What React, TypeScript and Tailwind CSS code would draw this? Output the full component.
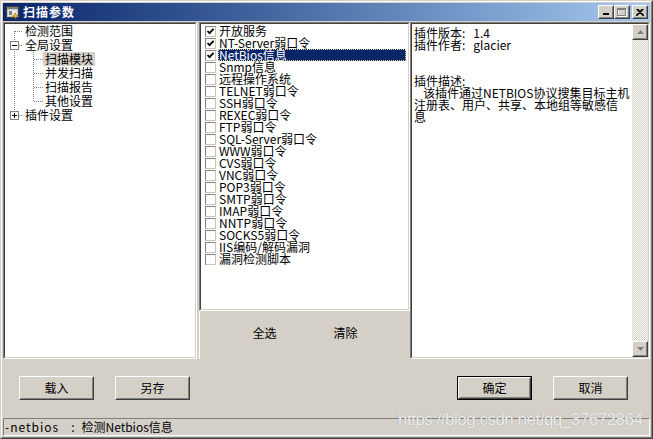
import React from "react";

function Sunken({ className = "", inner = "", children }: { className?: string; inner?: string; children?: React.ReactNode }) {
  return (
    <div className={`border border-t-[#808080] border-l-[#808080] border-b-white border-r-white ${className}`}>
      <div className={`h-full border border-t-[#404040] border-l-[#404040] border-b-[#d4d0c8] border-r-[#d4d0c8] ${inner}`}>{children}</div>
    </div>
  );
}

function Raised({ className = "", inner = "", children }: { className?: string; inner?: string; children?: React.ReactNode }) {
  return (
    <div className={`border border-t-white border-l-white border-b-[#404040] border-r-[#404040] bg-[#d4d0c8] ${className}`}>
      <div className={`h-full border border-t-[#d4d0c8] border-l-[#d4d0c8] border-b-[#808080] border-r-[#808080] ${inner}`}>{children}</div>
    </div>
  );
}

function Button({ label, def = false }: { label: string; def?: boolean }) {
  if (def) {
    return (
      <div className="w-[75px] h-[24px] border border-black">
        <Raised className="h-full" inner="flex items-center justify-center">
          {label}
        </Raised>
      </div>
    );
  }
  return (
    <Raised className="w-[75px] h-[24px]" inner="flex items-center justify-center">
      {label}
    </Raised>
  );
}

function Check({ checked }: { checked: boolean }) {
  return (
    <div className="w-[11px] h-[11px] shrink-0 border border-t-[#808080] border-l-[#808080] border-b-[#c8c4bc] border-r-[#c8c4bc] bg-white">
      {checked && (
        <svg width="9" height="9" viewBox="0 0 9 9" className="block">
          <polyline points="1.5,4 3.5,6.2 7.6,1.8" fill="none" stroke="#000" strokeWidth="1.8" />
        </svg>
      )}
    </div>
  );
}

const items: [string, boolean][] = [
  ["开放服务", true],
  ["NT-Server弱口令", true],
  ["NetBios信息", true],
  ["Snmp信息", false],
  ["远程操作系统", false],
  ["TELNET弱口令", false],
  ["SSH弱口令", false],
  ["REXEC弱口令", false],
  ["FTP弱口令", false],
  ["SQL-Server弱口令", false],
  ["WWW弱口令", false],
  ["CVS弱口令", false],
  ["VNC弱口令", false],
  ["POP3弱口令", false],
  ["SMTP弱口令", false],
  ["IMAP弱口令", false],
  ["NNTP弱口令", false],
  ["SOCKS5弱口令", false],
  ["IIS编码/解码漏洞", false],
  ["漏洞检测脚本", false],
];

const tree: { label: string; level: number; selected?: boolean }[] = [
  { label: "检测范围", level: 0 },
  { label: "全局设置", level: 0 },
  { label: "扫描模块", level: 1, selected: true },
  { label: "并发扫描", level: 1 },
  { label: "扫描报告", level: 1 },
  { label: "其他设置", level: 1 },
  { label: "插件设置", level: 0 },
];

function TreeLines() {
  const dot = { stroke: "#808080", strokeWidth: 1, strokeDasharray: "1 1", shapeRendering: "crispEdges" as const };
  return (
    <svg width="60" height="100" className="absolute left-0 top-0 pointer-events-none">
      <line x1="9.5" y1="7" x2="9.5" y2="91" {...dot} />
      <line x1="10" y1="7.5" x2="18" y2="7.5" {...dot} />
      <line x1="10" y1="21.5" x2="18" y2="21.5" {...dot} />
      <line x1="10" y1="91.5" x2="18" y2="91.5" {...dot} />
      <line x1="28.5" y1="26" x2="28.5" y2="77" {...dot} />
      <line x1="29" y1="35.5" x2="38" y2="35.5" {...dot} />
      <line x1="29" y1="49.5" x2="38" y2="49.5" {...dot} />
      <line x1="29" y1="63.5" x2="38" y2="63.5" {...dot} />
      <line x1="29" y1="77.5" x2="38" y2="77.5" {...dot} />
      <rect x="5.5" y="17.5" width="8" height="8" fill="#fff" stroke="#808080" shapeRendering="crispEdges" />
      <line x1="7" y1="21.5" x2="12" y2="21.5" stroke="#000" shapeRendering="crispEdges" />
      <rect x="5.5" y="87.5" width="8" height="8" fill="#fff" stroke="#808080" shapeRendering="crispEdges" />
      <line x1="7" y1="91.5" x2="12" y2="91.5" stroke="#000" shapeRendering="crispEdges" />
      <line x1="9.5" y1="89" x2="9.5" y2="94" stroke="#000" shapeRendering="crispEdges" />
    </svg>
  );
}

export default function App() {
  return (
    <div className="w-[653px] h-[439px] font-['Noto_Sans_CJK_SC','Liberation_Sans',sans-serif] text-[12px] leading-[12px] text-black bg-[#d4d0c8] border border-t-[#d4d0c8] border-l-[#d4d0c8] border-b-[#404040] border-r-[#404040]">
      <div className="h-full border border-t-white border-l-white border-b-[#808080] border-r-[#808080] p-px flex flex-col relative">
        {/* Title bar */}
        <div className="h-[18px] shrink-0 flex items-center bg-linear-to-r from-[#0a246a] to-[#a6caf0]">
          <svg width="16" height="16" viewBox="0 0 16 16" className="ml-[2px] shrink-0">
            <rect x="1.5" y="2.5" width="12" height="11" fill="#c0c0c0" stroke="#404040" />
            <rect x="2" y="3" width="11" height="2" fill="#808080" />
            <rect x="3" y="6" width="9" height="6" fill="#e8e8e8" />
            <rect x="4" y="7" width="3" height="4" fill="#808080" />
            <path d="M10 9 L11 11 L13 11.5 L11 12.5 L10.5 15 L9.5 12.5 L7.5 12 L9.5 11 Z" fill="#f0d000" stroke="#806000" strokeWidth="0.5" />
          </svg>
          <span className="ml-[2px] text-white font-bold tracking-[1px]">扫描参数</span>
          <div className="ml-auto mr-[2px] flex items-center">
            <Raised className="w-[16px] h-[14px]" inner="relative">
              <div className="absolute left-[3px] bottom-[2px] w-[6px] h-[2px] bg-black" />
            </Raised>
            <Raised className="w-[16px] h-[14px]" inner="flex items-center justify-center">
              <svg width="10" height="9" viewBox="0 0 10 9">
                <rect x="1.5" y="1.5" width="8" height="7" fill="none" stroke="#fff" />
                <rect x="0.5" y="0.5" width="8" height="7" fill="none" stroke="#808080" />
                <line x1="0" y1="1.5" x2="9" y2="1.5" stroke="#808080" />
              </svg>
            </Raised>
            <Raised className="w-[16px] h-[14px] ml-[2px]" inner="flex items-center justify-center">
              <svg width="8" height="7" viewBox="0 0 8 7">
                <path d="M0.5 0 L7.5 7 M1.5 0 L8 6.5 M7.5 0 L0.5 7 M6.5 0 L0 6.5" stroke="#000" strokeWidth="1.1" />
              </svg>
            </Raised>
          </div>
        </div>

        {/* Panels */}
        <div className="mt-px h-[337px] shrink-0 flex">
          {/* Tree */}
          <Sunken className="w-[194px] h-full" inner="bg-white relative">
            <TreeLines />
            <div className="relative">
              {tree.map((t, i) => (
                <div key={i} className="h-[14px] flex items-center">
                  <div className={t.level === 0 ? "w-[18px]" : "w-[38px]"} />
                  <span className={`px-[2px] h-[14px] flex items-center ${t.selected ? "bg-[#d4d0c8]" : ""}`}>{t.label}</span>
                </div>
              ))}
            </div>
          </Sunken>

          <div className="w-[2px]" />

          {/* Middle */}
          <div className="w-[211px] h-full flex flex-col">
            <Sunken className="h-[289px]" inner="bg-white pt-px">
              {items.map(([label, checked], i) => {
                const sel = i === 2;
                return (
                  <div key={i} className="h-[12px] flex items-center pl-[4px]">
                    <Check checked={checked} />
                    <span
                      className={`ml-[2px] px-px h-[12px] flex items-center whitespace-nowrap ${
                        sel ? "flex-1 mr-[2px] bg-[#0a246a] text-white outline-1 outline-dotted outline-[#e8d890] -outline-offset-1" : ""
                      }`}
                    >
                      {label}
                    </span>
                  </div>
                );
              })}
            </Sunken>
            <div className="flex-1 flex pl-[27px] pt-[10px] gap-[6px] border-l border-l-white">
              <div className="w-[75px] h-[24px] flex items-center justify-center">全选</div>
              <div className="w-[75px] h-[24px] flex items-center justify-center">清除</div>
            </div>
          </div>

          {/* Right */}
          <Sunken className="w-[240px] h-full" inner="flex">
            <div className="flex-1 bg-white pl-[2px] pt-[3px]">
              <div className="h-[12px] flex items-center">
                <span>插件版本:</span>
                <span className="ml-[8px]">1.4</span>
              </div>
              <div className="h-[12px] flex items-center">
                <span>插件作者:</span>
                <span className="ml-[8px]">glacier</span>
              </div>
              <div className="h-[12px]" />
              <div className="h-[12px]" />
              <div className="h-[12px]">插件描述:</div>
              <div className="h-[12px] pl-[9px] whitespace-nowrap">该插件通过NETBIOS协议搜集目标主机</div>
              <div className="h-[12px] whitespace-nowrap">注册表、用户、共享、本地组等敏感信</div>
              <div className="h-[12px]">息</div>
            </div>
            <div className="w-[16px] flex flex-col">
              <Raised className="h-[16px]" inner="flex items-center justify-center">
                <svg width="7" height="4" viewBox="0 0 7 4">
                  <path d="M3.5 0 L7 4 L0 4 Z" fill="#808080" />
                </svg>
              </Raised>
              <div className="flex-1 bg-[repeating-conic-gradient(#d4d0c8_0_25%,#ffffff_0_50%)] bg-[length:2px_2px]" />
              <Raised className="h-[16px]" inner="flex items-center justify-center">
                <svg width="7" height="4" viewBox="0 0 7 4">
                  <path d="M0 0 L7 0 L3.5 4 Z" fill="#808080" />
                </svg>
              </Raised>
            </div>
          </Sunken>
        </div>

        {/* Bottom buttons */}
        <div className="h-[59px] shrink-0 flex items-start justify-between pt-[17px] pl-[16px] pr-[22px]">
          <div className="flex gap-[21px]">
            <Button label="载入" />
            <Button label="另存" />
          </div>
          <div className="flex gap-[21px]">
            <Button label="确定" def />
            <Button label="取消" />
          </div>
        </div>

        {/* Status bar */}
        <div className="h-[18px] shrink-0 border border-t-[#808080] border-l-[#808080] border-b-white border-r-white flex items-center pl-px">
          <span className="tracking-[1px]">-netbios</span>
          <span className="ml-[12px]">:</span>
          <span className="ml-[7px]">检测Netbios信息</span>
        </div>

        <div className="absolute left-[396px] top-[409px] text-[17px] leading-[17px] tracking-[-0.5px] font-['Liberation_Sans',sans-serif] text-[#ececec] [text-shadow:0_0_1px_#9a9a9a] pointer-events-none">
          https://blog.csdn.net/qq_37672864
        </div>
      </div>
    </div>
  );
}
